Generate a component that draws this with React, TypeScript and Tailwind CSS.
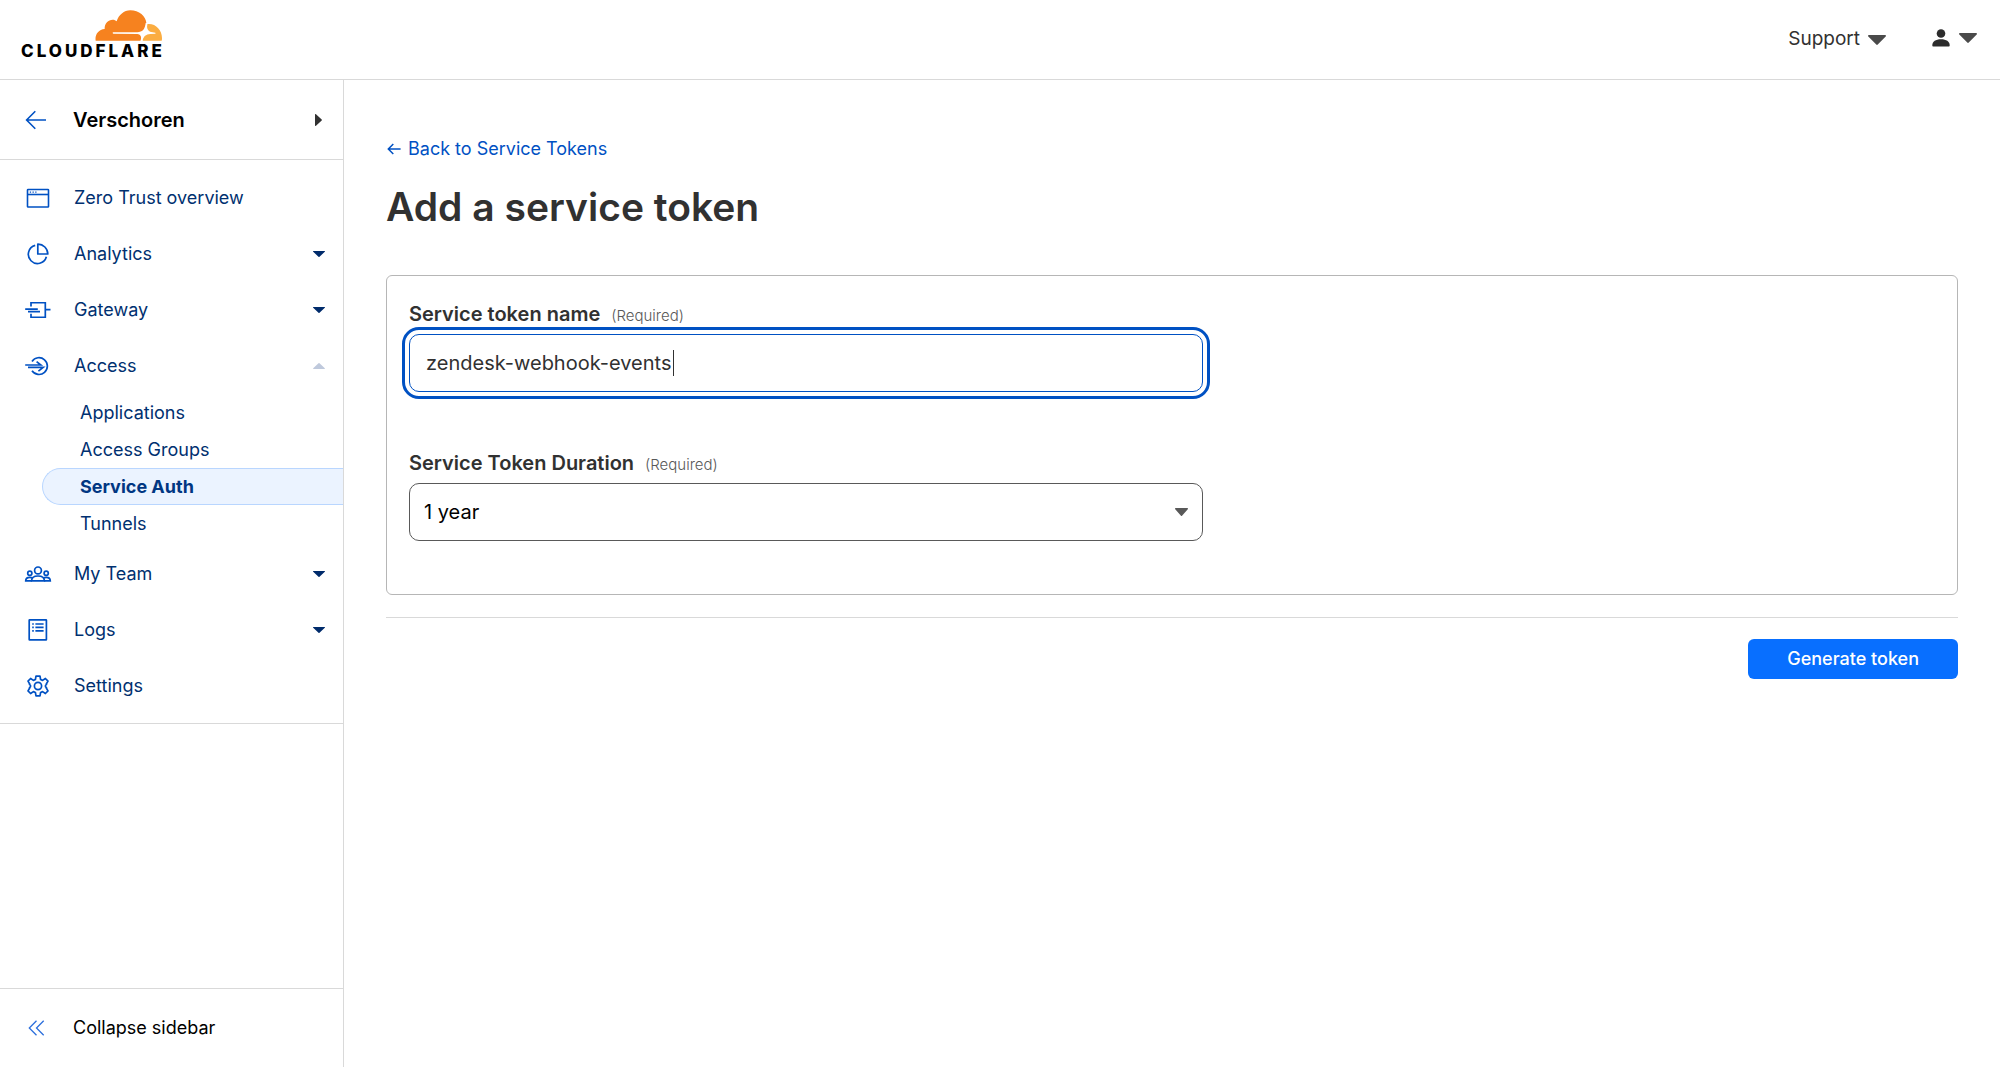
import { useState, type ReactNode } from "react";

type NavItem = {
  label: string;
  icon: ReactNode;
  expandable?: boolean;
  children?: { label: string; active?: boolean }[];
};

function CloudLogo() {
  return (
    <svg viewBox="280 29 201 93" className="mr-[3px] h-[31px] w-[67px]" aria-hidden="true">
      <path
        fill="#f6821f"
        d="M282 121c-3-17 8-34 27-35-1-15 10-28 24-28 5 0 9 2 12 5 6-19 22-33 41-33 26 0 47 18 48 38l-6 24-11 11c1 4 2 9 0 18Z"
      />
      <path fill="#fbad41" d="M423 121l-3-14 14-10 3-26c24-3 44 17 44 42 0 3 0 6-1 8Z" />
      <path
        fill="#fff"
        d="M335 96h72c15-1 23-9 25-28h5c-3 17 2 25 12 27l12 2c1 1 1 2 0 3l-15 1c-14 1-20 7-24 21h-5c4-14-1-20-10-21l-72-1c-3 0-3-4 0-4Z"
      />
    </svg>
  );
}

function Caret({ className }: { className: string }) {
  return (
    <svg viewBox="0 0 12 7" preserveAspectRatio="none" className={className} fill="currentColor" aria-hidden="true">
      <path d="M.6 0h10.8c.6 0 .8.6.4 1L6.5 6.7a.7.7 0 0 1-1 0L.2 1C-.2.6 0 0 .6 0Z" />
    </svg>
  );
}

function Icon({ children, width = 2 }: { children: ReactNode; width?: number }) {
  return (
    <svg
      viewBox="0 0 28 28"
      className="h-7 w-7 shrink-0 text-[#0051c3]"
      fill="none"
      stroke="currentColor"
      strokeWidth={width}
      aria-hidden="true"
    >
      {children}
    </svg>
  );
}

const navItems: NavItem[] = [
  {
    label: "Zero Trust overview",
    icon: (
      <Icon width={1.6}>
        <rect x="3.5" y="5.5" width="21" height="17.5" rx=".6" />
        <path d="M3.5 10.5h21" />
        <path d="M5.8 8.1h1.3M8.5 8.1h1.3M11.2 8.1h1.3" strokeWidth="1.3" />
      </Icon>
    ),
  },
  {
    label: "Analytics",
    expandable: true,
    icon: (
      <Icon width={1.7}>
        <path d="M11.2 5.4a9.2 9.2 0 1 0 11.2 11.4" />
        <path d="M13.8 4.2V14h10a9.8 9.8 0 0 0-10-9.8Z" strokeLinejoin="round" />
      </Icon>
    ),
  },
  {
    label: "Gateway",
    expandable: true,
    icon: (
      <Icon width={1.7}>
        <path d="M7 10.6V6.75h14.3v14.5H7v-3.6" />
        <path d="M21.3 13.6h5.2M1.2 13.2h12.6M4 15.7h12" />
      </Icon>
    ),
  },
  {
    label: "Access",
    expandable: true,
    icon: (
      <Icon width={1.7}>
        <path d="M8 9.4a8.4 8.4 0 1 1 0 9.4" />
        <path d="M1.2 13h15.6l-4.2-3.4M4 15.4h15.2l-4.8 3.8" />
      </Icon>
    ),
    children: [
      { label: "Applications" },
      { label: "Access Groups" },
      { label: "Service Auth", active: true },
      { label: "Tunnels" },
    ],
  },
  {
    label: "My Team",
    expandable: true,
    icon: (
      <Icon width={1.7}>
        <circle cx="14" cy="10.4" r="3.4" />
        <circle cx="5.8" cy="13.2" r="2.1" />
        <circle cx="22.2" cy="13.2" r="2.1" />
        <path d="M7.6 20.9c0-3.2 2.8-4.9 6.4-4.9s6.4 1.7 6.4 4.9Z" />
        <path d="M7.8 20.9H1.7c0-2.5 1.6-3.6 4.1-3.6 1.2 0 2 .2 2.8.7M20.2 20.9h6.1c0-2.5-1.6-3.6-4.1-3.6-1.2 0-2 .2-2.8.7" />
      </Icon>
    ),
  },
  {
    label: "Logs",
    expandable: true,
    icon: (
      <Icon width={1.7}>
        <rect x="5.2" y="3.9" width="17.2" height="20" rx=".4" />
        <path d="M8.2 8h1.6M11.4 8h8.2M8.2 11.4h1.6M11.4 11.4h8.2M8.2 14.8h1.6M11.4 14.8h8.2" />
      </Icon>
    ),
  },
  {
    label: "Settings",
    icon: (
      <Icon width={1.7}>
        <circle cx="14" cy="14" r="3.6" />
        <path
          strokeLinejoin="round"
          d="M12 4.2h4l.6 3.3 2 .9 2.8-1.9 2.6 2.6-1.7 2.9.2.5c-1.5.6-1.5 2.4 0 3l-.2.5 1.7 2.9-2.6 2.6-2.8-1.9-2 .9-.6 3.3h-4l-.6-3.3-2-.9-2.8 1.9L4 18.9 5.700 16l-.2-.5c1.500-.6 1.500-2.400 0-3l.2-.5L4 9.100l2.600-2.600 2.800 1.900 2-.9Z"
        />
      </Icon>
    ),
  },
];

function Sidebar() {
  return (
    <aside className="flex w-[344px] shrink-0 flex-col border-r border-[#d9d9d9]">
      <div className="flex h-20 items-center border-b border-[#d9d9d9] pr-[21px] pl-[25px]">
        <button type="button" aria-label="Back" className="mr-[26px] text-[#0051c3]">
          <svg viewBox="0 0 22 20" className="h-5 w-[22px]" fill="none" stroke="currentColor" strokeWidth="1.6" aria-hidden="true">
            <path d="M21 10H2M10.3 1.3 1.6 10l8.7 8.7" />
          </svg>
        </button>
        <button type="button" className="flex grow items-center justify-between text-xl font-semibold text-black">
          Verschoren
          <svg viewBox="0 0 7 12" className="h-3 w-[7px]" fill="#313131" aria-hidden="true">
            <path d="M0 .6C0 0 .6-.1 1 .3l5.7 5.200c.3.3.3.700 0 1L1 11.700c-.4.400-1 .200-1-.3Z" />
          </svg>
        </button>
      </div>

      <nav aria-label="Zero Trust" className="border-b border-[#d9d9d9] pt-[10px] pb-[9px] text-lg text-[#003070]">
        <ul>
          {navItems.map((item) => (
            <li key={item.label}>
              <button
                type="button"
                aria-expanded={item.expandable ? Boolean(item.children) : undefined}
                className="flex h-14 w-full items-center gap-[22px] pr-[18px] pl-6 text-left"
              >
                {item.icon}
                <span className="grow">{item.label}</span>
                {item.expandable && (
                  <Caret
                    className={item.children ? "h-[6px] w-[12px] rotate-180 text-[#bfc9dc]" : "h-[6px] w-[12px] text-[#002b6b]"}
                  />
                )}
              </button>
              {item.children && (
                <ul className="mb-1 pl-[42px]">
                  {item.children.map((child) => (
                    <li key={child.label}>
                      <a
                        href="#"
                        aria-current={child.active ? "page" : undefined}
                        className={
                          child.active
                            ? "flex h-[37px] items-center rounded-l-full border border-r-0 border-[#b9d6ff] bg-[#ebf3ff] pl-[37px] font-bold text-[#003682]"
                            : "flex h-[37px] items-center pl-[38px]"
                        }
                      >
                        {child.label}
                      </a>
                    </li>
                  ))}
                </ul>
              )}
            </li>
          ))}
        </ul>
      </nav>

      <button
        type="button"
        className="mt-auto flex h-[79px] items-center gap-7 border-t border-[#d9d9d9] pl-7 text-lg text-black"
      >
        <svg viewBox="0 0 17 16" className="h-4 w-[17px]" fill="none" stroke="#2c6fdc" strokeWidth="1.3" aria-hidden="true">
          <path d="M8.500.7 1.300 8l7.200 7.300M15.700.7 8.500 8l7.200 7.300" />
        </svg>
        Collapse sidebar
      </button>
    </aside>
  );
}

function FieldLabel({ htmlFor, children }: { htmlFor: string; children: ReactNode }) {
  return (
    <label htmlFor={htmlFor} className="flex items-baseline gap-[11px] py-1 text-xl leading-7 font-semibold text-[#313131]">
      {children}
      <span className="text-[15px] leading-7 font-light text-[#595959]">(Required)</span>
    </label>
  );
}

export default function App() {
  const [name, setName] = useState("zendesk-webhook-events");
  const [duration, setDuration] = useState("1 year");

  return (
    <div className="flex min-h-screen flex-col bg-white font-['Inter',sans-serif] text-[#313131]">
      <header className="flex h-20 items-center justify-between border-b border-[#d9d9d9] pr-[23px] pl-[21px]">
        <a href="#" aria-label="Cloudflare" className="mb-3 flex flex-col items-end gap-1 text-black">
          <CloudLogo />
          <span className="text-[17px] leading-3 font-extrabold tracking-[3px]">CLOUDFLARE</span>
        </a>
        <div className="flex items-center gap-[46px]">
          <button type="button" className="flex items-center gap-2 text-[19px]">
            Support
            <Caret className="h-[10px] w-[18px] text-[#4a4a4a]" />
          </button>
          <button type="button" aria-label="Account" className="mb-1 flex items-center gap-[9px]">
            <svg viewBox="0 0 18 18" className="h-[18px] w-[18px]" fill="#2c2c2c" aria-hidden="true">
              <circle cx="9" cy="4.5" r="4.3" />
              <path d="M.3 16.500c0-4.200 3.400-6.300 8.700-6.300s8.700 2.100 8.700 6.300c0 .6-.3.9-.9.900H1.200c-.6 0-.9-.3-.9-.9Z" />
            </svg>
            <Caret className="h-[10px] w-[18px] text-[#4a4a4a]" />
          </button>
        </div>
      </header>

      <div className="flex grow">
        <Sidebar />
        <main className="min-w-0 grow px-[42px] pt-[57px]">
          <a href="#" className="flex h-6 w-fit items-center gap-[7px] pl-px text-lg text-[#0051c3]">
            <svg viewBox="0 0 14 12" className="h-3 w-[14px]" fill="none" stroke="currentColor" strokeWidth="1.5" aria-hidden="true">
              <path d="M13.600 6H1.500M6.300 1 1.300 6l5 5" />
            </svg>
            Back to Service Tokens
          </a>
          <h1 className="mt-[22px] text-[39px] leading-[48px] font-semibold">Add a service token</h1>

          <form onSubmit={(event) => event.preventDefault()}>
            <div className="mt-11 rounded-md border border-[#b6b6b6] px-[22px] pt-[20px] pb-[53px]">
              <FieldLabel htmlFor="token-name">Service token name</FieldLabel>
              <div className="relative w-[52%]">
                <input
                  id="token-name"
                  type="text"
                  required
                  value={name}
                  onChange={(event) => setName(event.target.value)}
                  className="block h-[58px] w-full rounded-[10px] border border-[#0051c3] px-4 text-xl outline-[3px] outline-offset-4 outline-[#0051c3] outline-solid"
                />
                <span className="pointer-events-none absolute top-4 left-[264px] h-[26px] w-px bg-[#313131]" />
              </div>

              <div className="mt-[53px]">
                <FieldLabel htmlFor="token-duration">Service Token Duration</FieldLabel>
                <div className="relative w-[52%]">
                  <select
                    id="token-duration"
                    required
                    value={duration}
                    onChange={(event) => setDuration(event.target.value)}
                    className="block h-[58px] w-full appearance-none rounded-[10px] border border-[#595959] bg-white px-[14px] text-xl text-black"
                  >
                    <option>1 year</option>
                    <option>Non-expiring</option>
                  </select>
                  <Caret className="pointer-events-none absolute top-[25px] right-[15px] h-2 w-[13px] text-[#595959]" />
                </div>
              </div>
            </div>

            <div className="mt-[22px] flex justify-end border-t border-[#d9d9d9] pt-[21px]">
              <button type="submit" className="h-10 rounded-md bg-[#086fff] px-[39px] text-lg font-medium text-white">
                Generate token
              </button>
            </div>
          </form>
        </main>
      </div>
    </div>
  );
}
